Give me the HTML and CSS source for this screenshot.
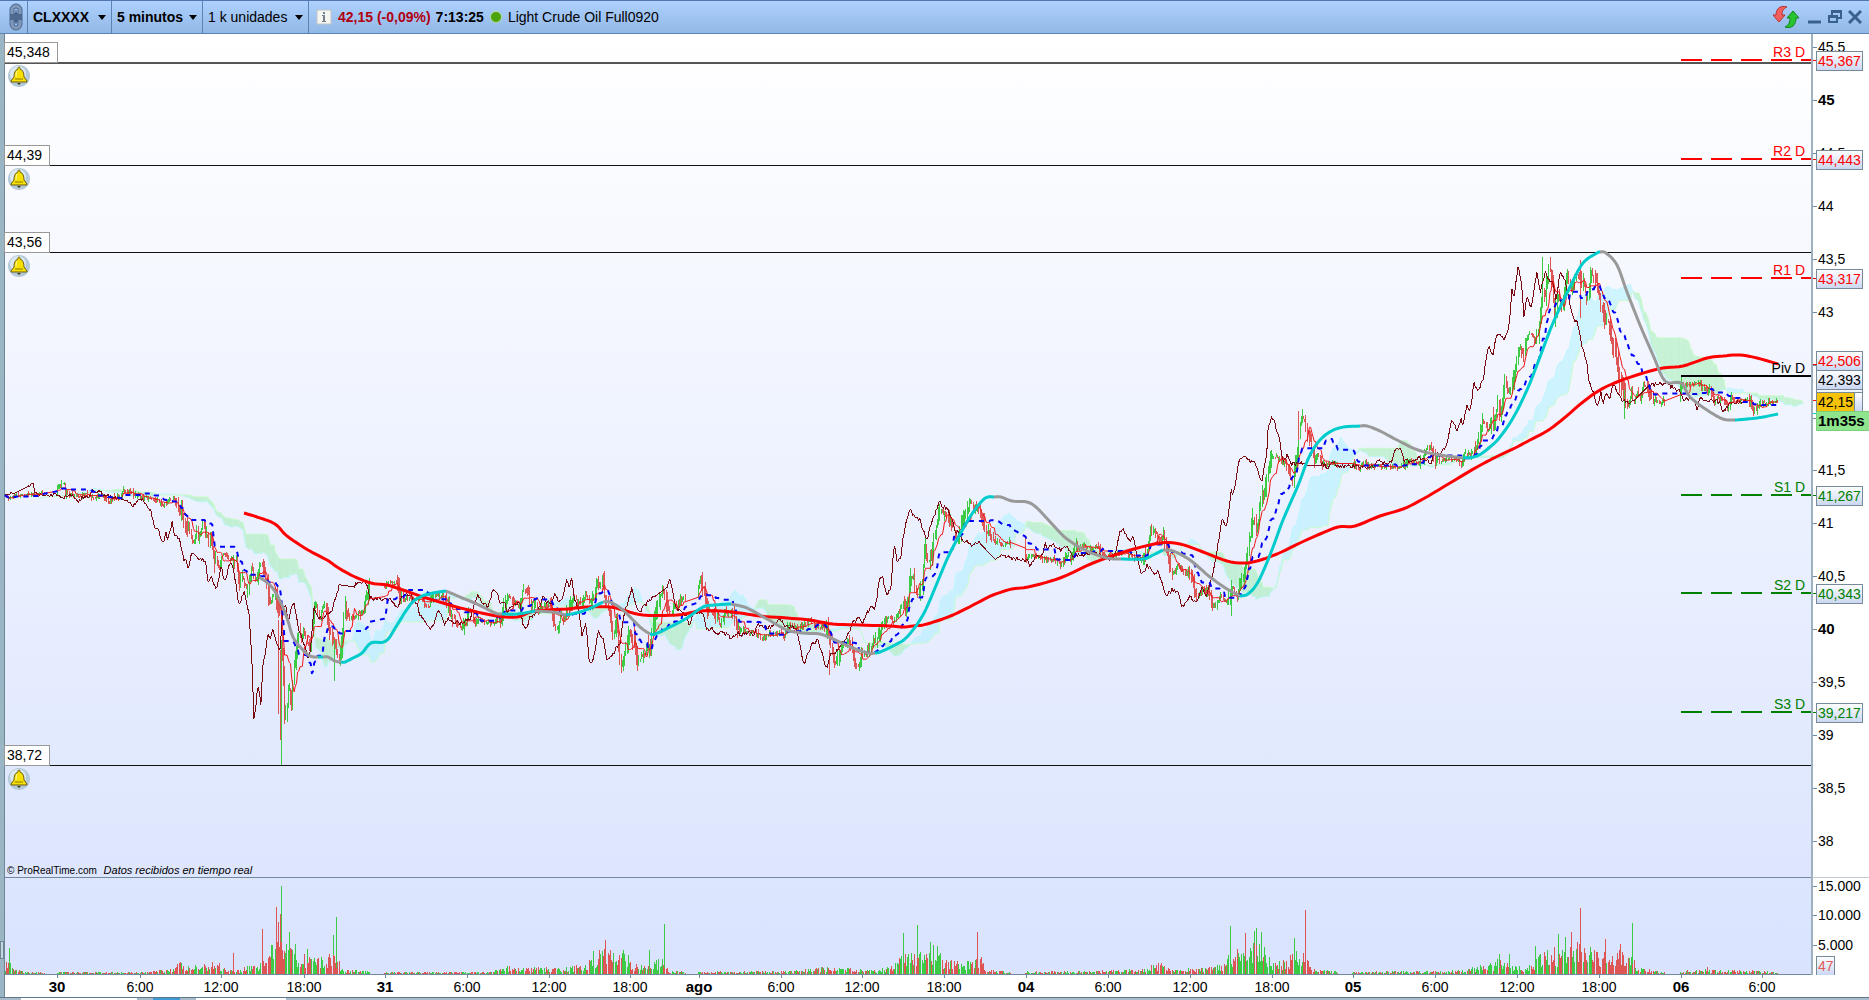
FILE: index.html
```html
<!DOCTYPE html>
<html lang="es">
<head>
    <meta charset="UTF-8">
    <meta name="viewport" content="width=device-width, initial-scale=1.0">
    <title>CLXXXX - 5 minutos</title>
    <link rel="stylesheet" href="styles.css">
</head>
<body>
    <header class="toolbar">
        <button class="link-button" aria-label="Vincular ventanas">
            <svg width="14" height="28" viewBox="0 0 14 28" fill="none">
                <g stroke="#4d6a91" stroke-width="5"><path d="M3 12V7a4 4 0 0 1 8 0v5zM3 17v4a4 4 0 0 0 8 0v-4z"/></g>
                <g stroke="#8099ba" stroke-width="3"><path d="M3 11V7a4 4 0 0 1 8 0v4M3 17v4a4 4 0 0 0 8 0v-4"/></g>
                <path d="M7 7v5M7 16v5" stroke="#3f5c85"/>
            </svg>
        </button>
        <label class="picker picker-symbol">
            <select aria-label="Instrumento"><option>CLXXXX</option></select>
            <span class="caret"></span>
        </label>
        <label class="picker picker-period">
            <select aria-label="Periodo"><option>5 minutos</option></select>
            <span class="caret"></span>
        </label>
        <label class="picker picker-units">
            <select aria-label="Unidades"><option>1 k unidades</option></select>
            <span class="caret"></span>
        </label>
        <button class="info-button" aria-label="Información">
            <svg width="16" height="16" viewBox="0 0 16 16">
                <rect x="1" y="1" width="14" height="14" fill="#f4f4f0" stroke="#c2c6c8"/>
                <path d="M7 3h2v2H7zM6 6h3v6h1v1H6v-1h1V7H6z" fill="#73808c"/>
            </svg>
        </button>
        <span class="last">42,15 (-0,09%)</span>
        <span class="clock">7:13:25</span>
        <span class="status"></span>
        <span class="name">Light Crude Oil Full0920</span>
        <div class="window-buttons">
            <button aria-label="Actualizar">
                <svg width="26" height="24" viewBox="0 0 26 24">
                    <path d="M14 2C8 0 3 3 3 10H0l6 7 6-7H9c0-4 1-6 5-8z" fill="#f2605d" stroke="#b72f31"/>
                    <path d="M12 22c7 2 11-2 11-9h3l-6-7-6 7h3c0 4-1 7-5 9z" fill="#27c42f" stroke="#13831b"/>
                </svg>
            </button>
            <button aria-label="Minimizar">
                <svg width="14" height="14" viewBox="0 0 14 14"><path d="M0 12h13" stroke="#39618f" stroke-width="3"/></svg>
            </button>
            <button aria-label="Restaurar">
                <svg width="14" height="14" viewBox="0 0 14 14" fill="none" stroke="#39618f">
                    <path d="M4 5V1h9v7h-3M4 2h9" stroke-width="2"/><path d="M1 6h8v6H1zM1 7h8" stroke-width="2"/>
                </svg>
            </button>
            <button aria-label="Cerrar">
                <svg width="14" height="14" viewBox="0 0 14 14"><path d="M1 1l12 12M13 1L1 13" stroke="#39618f" stroke-width="3"/></svg>
            </button>
        </div>
    </header>

    <main class="workspace">
        <aside class="rail"><span class="grip"></span></aside>
        <div class="plots">
            <section class="price-panel">
                <svg id="price" class="layer"></svg>
                <p class="credits">© ProRealTime.com <em>Datos recibidos en tiempo real</em></p>
            </section>
            <section class="volume-panel">
                <svg id="volume" class="layer"></svg>
            </section>
        </div>
        <div class="axes">
            <div class="price-axis"><svg id="price-axis" class="layer"></svg></div>
            <div class="volume-axis"><svg id="volume-axis" class="layer"></svg></div>
        </div>
        <div class="time-axis"><svg id="time-axis" class="layer"></svg></div>
    </main>
    <footer class="dock"><span class="dock-tab"></span><span class="dock-active"></span><span class="dock-tab wide"></span></footer>

    <script src="chart.js"></script>
</body>
</html>
```
FILE: styles.css
```css
* { box-sizing: border-box; }
body {
    margin: 0;
    height: 100vh;
    display: flex;
    flex-direction: column;
    overflow: hidden;
    font-family: "Liberation Sans", Arial, sans-serif;
    font-size: 14px;
    color: #000;
    background: #fff;
}
button { border: 0; padding: 0; background: none; cursor: pointer; display: flex; }

/* toolbar */
.toolbar {
    height: 34px;
    flex: none;
    display: flex;
    align-items: center;
    white-space: nowrap;
    border-top: 1px solid #4f78ae;
    border-bottom: 1px solid #5d83b5;
    background: linear-gradient(#aed1ff, #92b8e6);
}
.link-button {
    width: 28px;
    height: 100%;
    padding-left: 9px;
    align-items: center;
    border-right: 1px solid #5d83b5;
}
.picker {
    height: 100%;
    display: flex;
    align-items: center;
    justify-content: space-between;
    padding: 0 5px;
    border-right: 1px solid #5d83b5;
}
.picker select {
    appearance: none;
    border: 0;
    padding: 0;
    background: none;
    font: inherit;
    color: inherit;
}
.picker-symbol { width: 84px; font-weight: bold; }
.picker-period { width: 91px; font-weight: bold; }
.picker-units { width: 106px; }
.caret { border: 4px solid transparent; border-top: 5px solid #000; border-bottom: 0; }
.info-button { margin: 0 6px 0 7px; }
.last { font-weight: bold; color: #b00010; margin-right: 5px; }
.clock { font-weight: bold; }
.status {
    width: 12px;
    height: 12px;
    margin: 0 6px;
    border-radius: 50%;
    border: 1px solid #b8dca0;
    background: #4ca30c;
}
.window-buttons { margin-left: auto; padding-right: 7px; display: flex; align-items: center; gap: 6px; }
.window-buttons button:first-child { margin-right: 3px; }

/* chart area */
.workspace {
    flex: 1;
    min-height: 0;
    display: grid;
    grid-template-columns: 5px 1fr 58px;
    grid-template-rows: 1fr 22px;
}
.rail {
    grid-row: 1 / 3;
    display: flex;
    align-items: flex-end;
    padding-bottom: 38px;
    background: #9ab6c5;
    border-right: 1px solid #6f8794;
}
.grip { width: 4px; height: 18px; border: 1px solid #6f8794; background: #c4d6df; }
.plots, .axes { display: flex; flex-direction: column; min-height: 0; }
.plots { background: linear-gradient(#fff, #d9e3fe); }
.price-panel, .price-axis { position: relative; flex: 1; min-height: 0; }
.volume-panel, .volume-axis { position: relative; height: 98px; flex: none; }
.volume-panel { border-top: 1px solid #718aa0; border-bottom: 1px solid #718aa0; }
.volume-axis { border-top: 1px solid #c3ccd4; }
.axes { border-left: 2px solid #9fb0bf; background: #fff; }
.time-axis { grid-column: 2 / 4; background: #fff; position: relative; }
.layer { position: absolute; inset: 0; width: 100%; height: 100%; display: block; overflow: visible; }
.credits { position: absolute; left: 2px; bottom: 0; margin: 0; font-size: 10px; line-height: 12px; }
.credits em { font-size: 11px; margin-left: 4px; }

/* chart marks */
svg text { font-size: 14px; }
svg .bold { font-size: 15px; font-weight: bold; }
.middle { text-anchor: middle; }
.end { text-anchor: end; }
.tick { stroke: #718aa0; }
.stroke { fill: none; stroke-linejoin: round; }
.up, .down { shape-rendering: crispEdges; }
.up { stroke: #3ccb45; }
.down { stroke: #dd5555; }
.cloud-up { fill: #a5f3ff; opacity: .5; }
.cloud-down { fill: #98efa8; opacity: .5; }
.span-a { stroke: #c0f6ff; }
.span-b { stroke: #c9fbcb; }
.tenkan { stroke: #f01414; }
.kijun { stroke: #0000f5; stroke-width: 2; stroke-dasharray: 5 5; }
.chikou { stroke: #7a0a12; shape-rendering: crispEdges; }
.ma-long { stroke: #ff0000; stroke-width: 3; }
.ma-up { stroke: #00cccc; stroke-width: 3; }
.ma-down { stroke: #999; stroke-width: 3; }
.alert-line { stroke: #111; stroke-width: 1; shape-rendering: crispEdges; }
.alert-line.wide { stroke: #555; stroke-width: 2; }
.alert-tag { fill: #fff; stroke: #999; shape-rendering: crispEdges; }
.pivot { stroke-width: 2; shape-rendering: crispEdges; }
.dashed { stroke-dasharray: 21 9; }
.value-box { fill: url(#box-fill); stroke: #778a99; shape-rendering: crispEdges; }
.value-box.current { fill: #f7c30a; }
.value-box.timer { fill: #8ee58e; stroke: #7bcf7b; }

/* bottom dock, only its top edge shows */
.dock { height: 3px; flex: none; display: flex; gap: 16px; padding-left: 21px; border-top: 1px solid #5f788e; background: #a9bccb; }
.dock-tab { width: 116px; background: #fff; }
.dock-tab.wide { width: 90px; }
.dock-active { width: 27px; background: #3c9ad6; }
```
FILE: chart.js
```javascript
// Coordinates below are on a 1869 x 1000 sheet; FRAME is the plot inside it.
const FRAME = { left: 5, top: 34, width: 1806, height: 843 };
const BAR = 327 / 276;
const SHIFT = 26;
const VOLUME_HEIGHT = 96;

const closes = [
    -26,497, -10,495, 6,494, 13,492, 20,487, 27,489, 33,483, 35,493, 43,495, 58,494, 61,499, 67,496, 73,495, 78,502, 83,497,
    88,497, 93,490, 99,492, 110,497, 117,498, 126,499, 133,505, 138,501, 143,500, 148,506, 151,510, 154,528, 158,530,
    163,543, 166,533, 167,540, 172,523, 174,533, 180,540, 184,561, 186,560, 188,569, 192,553, 197,558, 206,560,
    208,586, 211,575, 215,587, 217,588, 220,573, 221,563, 224,582, 227,575, 230,563, 233,567, 235,578, 239,607,
    244,590, 249,613, 252,660, 254,723, 258,683, 261,704, 263,663, 266,650, 268,633, 271,643, 272,627, 276,640,
    280,650, 283,610, 286,607, 289,623, 292,603, 294,603, 298,627, 302,640, 305,645, 308,660, 310,653, 312,633,
    314,607, 317,617, 323,619, 327,612, 330,615, 333,607, 337,593, 340,583, 343,585, 347,577, 348,583, 353,587,
    357,583, 367,583, 370,598, 393,600, 396,608, 398,607, 403,595, 410,595, 417,603, 419,613, 425,620, 430,631,
    435,620, 438,610, 442,615, 444,625, 448,618, 453,623, 460,623, 467,620,
    470,620, 473,607, 478,595, 482,603, 487,606, 490,602, 493,588, 497,592, 500,602, 505,603, 507,613, 513,605,
    520,602, 523,625, 527,630, 530,618, 535,614, 540,607, 543,595, 546,603, 552,603, 555,593, 560,603, 564,593,
    567,577, 569,588, 572,577, 574,600, 577,604, 580,617, 582,637, 586,623, 589,661, 593,662, 598,632, 603,637,
    607,660, 612,657, 616,647, 620,643, 623,620, 627,605, 632,588, 636,607, 639,613, 643,607, 650,600, 653,596,
    658,595, 661,586, 667,587, 669,580, 672,586, 675,605, 680,612, 687,615, 689,627, 693,612, 703,613, 706,628,
    712,629, 717,635, 722,632, 732,638, 737,632, 742,635, 748,632, 754,634, 758,625, 767,628, 773,625, 780,620,
    785,625, 796,628, 798,635, 801,652, 804,665, 808,653, 813,643, 818,640, 823,657, 827,670, 830,655, 835,653,
    842,643, 847,637, 853,623, 860,618, 862,623, 868,612, 872,606, 875,610, 879,582, 882,575, 887,595, 891,587,
    894,543, 897,562, 901,557, 903,537, 906,523, 910,509, 913,515, 920,520, 922,527, 927,540, 932,520, 935,515,
    939,502, 943,507, 947,508, 952,517, 955,532, 960,533, 964,545, 967,541, 973,546, 978,541, 983,549, 990,543,
    994,560, 1000,556, 1010,558, 1027,560, 1030,567, 1035,557, 1042,555, 1045,543, 1048,548, 1053,544, 1060,550,
    1067,546, 1073,557, 1080,555, 1090,553, 1100,555, 1110,560, 1116,553, 1120,529, 1123,530, 1128,537, 1131,544,
    1133,535, 1137,557, 1142,575, 1147,565, 1153,573, 1158,572, 1162,583, 1166,597, 1172,590, 1178,592, 1182,607,
    1187,602, 1190,597, 1197,602, 1202,588, 1206,598, 1210,583, 1213,573, 1217,550, 1220,533, 1222,518, 1227,527,
    1231,490, 1233,497, 1237,473, 1239,460, 1244,456, 1248,460, 1253,463, 1255,461, 1258,473, 1262,480, 1264,468,
    1267,453, 1268,430, 1271,418, 1274,419, 1276,430, 1278,432, 1283,460, 1287,455, 1291,463, 1297,465, 1303,463,
    1310,466, 1317,467, 1322,463, 1328,468, 1333,462, 1338,466, 1353,466, 1363,467, 1373,467, 1377,460, 1382,463,
    1392,462, 1394,450, 1400,448, 1404,460, 1413,461, 1420,458, 1425,460, 1432,462, 1434,452, 1440,455, 1446,445,
    1449,435, 1452,418, 1457,432, 1461,420, 1463,427, 1467,403, 1470,413, 1474,383, 1478,393, 1481,382, 1483,383,
    1488,345, 1493,355, 1496,337, 1499,332, 1505,340, 1509,327, 1512,290, 1514,297, 1518,267, 1522,287, 1524,318,
    1527,295, 1531,308, 1537,272, 1540,293, 1545,272, 1550,283, 1553,280, 1556,302, 1560,273, 1565,280, 1568,295,
    1572,315, 1578,325, 1583,350, 1587,363, 1589,382, 1593,390, 1597,407, 1601,393, 1603,402, 1607,392, 1610,398,
    1613,383, 1617,390, 1622,400, 1628,403, 1635,400, 1640,393, 1644,382, 1647,385, 1657,384, 1665,383, 1682,393,
    1683,400, 1693,398, 1697,410, 1700,397, 1707,401, 1713,400, 1720,402, 1723,413, 1730,403, 1740,402, 1748,401
];
const longAverage = [
    244,513, 257,517, 275,524, 287,536, 308,550, 327,560, 337,567, 353,576, 371,583, 387,585, 403,590, 423,597,
    443,603, 453,606, 473,611, 497,616, 517,617, 535,611, 567,609, 587,607, 610,607, 623,610, 643,615, 677,615,
    700,611, 720,611, 740,613, 760,616, 787,618, 810,620, 833,624, 860,625, 890,626, 903,627, 913,626, 927,624,
    953,615, 977,603, 993,595, 1012,589, 1028,587, 1060,578, 1093,563, 1127,551, 1160,543, 1180,544, 1203,552,
    1227,561, 1243,563, 1257,561, 1277,554, 1300,543, 1320,534, 1338,527, 1355,526, 1380,516, 1403,509, 1423,499,
    1450,483, 1477,467, 1500,455, 1515,448, 1530,440, 1547,431, 1563,419, 1583,402, 1600,390, 1617,382, 1640,374,
    1663,368, 1683,366, 1707,358, 1723,356, 1740,355, 1757,358, 1778,364
];
const mediumAverage = [
    ['down', [259,577, 270,585, 278,597, 287,618, 293,637, 302,649, 310,656, 318,657]],
    ['up', [318,657, 323,657]],
    ['down', [323,657, 328,657, 335,661, 341,662]],
    ['up', [341,662, 345,662, 353,658, 362,653, 371,643, 386,641, 397,625, 410,605, 420,597, 433,593, 446,591]],
    ['down', [446,591, 460,597, 477,604, 495,613, 502,614]],
    ['up', [502,614, 517,614, 535,611]],
    ['down', [535,611, 553,612, 566,615]],
    ['up', [566,615, 580,612, 593,607, 603,602]],
    ['down', [603,602, 610,602, 623,610, 640,627, 650,634]],
    ['up', [650,634, 655,634, 670,627, 687,618, 703,607, 715,605, 731,604]],
    ['down', [731,604, 747,608, 767,619, 787,630, 803,633, 820,634, 833,639, 853,648, 868,653, 875,653]],
    ['up', [875,653, 880,652, 893,646, 907,637, 923,615, 935,588, 950,553, 970,517, 982,501, 988,497, 994,497]],
    ['down', [994,497, 1001,497, 1012,501, 1027,502, 1037,508, 1053,525, 1067,539, 1087,551, 1107,558, 1121,559]],
    ['up', [1121,559, 1143,559, 1153,555, 1163,550]],
    ['down', [1163,550, 1173,551, 1190,560, 1210,577, 1227,589, 1240,596]],
    ['up', [1240,596, 1248,594, 1258,582, 1270,555, 1283,520, 1297,488, 1310,455, 1323,437, 1339,428, 1360,426]],
    ['down', [1360,426, 1367,426, 1380,431, 1397,440, 1418,450, 1440,455, 1463,458]],
    ['up', [1463,458, 1477,456, 1490,447, 1500,437, 1513,418, 1527,390, 1540,357, 1553,323, 1570,287, 1583,263, 1597,253, 1600,252]],
    ['down', [1600,252, 1606,253, 1617,265, 1627,292, 1640,325, 1653,355, 1665,381, 1681,383, 1690,397, 1707,410, 1723,419, 1735,420]],
    ['up', [1735,420, 1757,418, 1778,414]]
];
const longWicks = [[281, 640, 765, 'up'], [280, 650, 740, 'down'], [278, 620, 714, 'down'], [1542, 257, 300, 'up'], [334, 640, 681, 'up'],
    [1231, 580, 616, 'up'], [1580, 260, 318, 'down'], [829, 650, 675, 'down'], [1624, 390, 419, 'up'], [1298, 411, 440, 'down'], [1681, 376, 395, 'up']];
const sessionBreaks = [[45, 57], [370, 384], [686, 698], [1012, 1025], [1339, 1352], [1666, 1680]];

const volumeShape = [
    5,8, 9,14, 14,4, 25,2, 50,2, 150,2, 175,6, 180,11, 186,6, 205,9, 216,12, 228,4, 240,4, 250,9, 258,8, 268,18, 275,40,
    285,40, 292,36, 300,16, 308,22, 318,13, 330,18, 338,16, 343,4, 380,2, 490,2, 505,7, 520,5, 540,6, 560,5, 580,8,
    588,8, 590,18, 612,24, 625,24, 632,10, 645,8, 662,14, 670,3, 700,2, 800,3, 820,7, 840,5, 860,5, 880,4, 895,8, 903,20,
    915,24, 925,18, 935,28, 945,13, 965,11, 982,16, 985,4, 1010,2, 1100,3, 1140,5, 1160,10, 1170,5, 1200,5, 1220,8, 1230,18,
    1245,24, 1262,28, 1272,13, 1285,12, 1295,24, 1305,22, 1312,5, 1350,2, 1450,3, 1475,6, 1490,10, 1500,14, 1525,6, 1535,14,
    1550,22, 1560,24, 1580,28, 1600,18, 1615,22, 1633,16, 1640,5, 1665,2, 1700,4, 1730,4, 1778,2
];
const volumeSpikes = [[9,26,'up'], [180,12,'down'], [233,21,'down'], [262,45,'down'], [276,67,'down'], [278,52,'down'], [280,60,'down'],
    [281,88,'up'], [289,42,'up'], [307,25,'up'], [333,39,'up'], [336,57,'up'], [605,34,'down'], [649,24,'up'], [664,50,'up'], [903,41,'up'],
    [917,49,'up'], [930,32,'up'], [977,42,'down'], [1230,48,'up'], [1245,41,'down'], [1254,43,'up'], [1256,46,'up'], [1261,42,'up'],
    [1294,36,'up'], [1305,64,'down'], [1499,20,'up'], [1509,20,'up'], [1535,28,'up'], [1558,40,'up'], [1565,37,'up'], [1571,42,'down'],
    [1580,66,'down'], [1605,35,'down'], [1620,30,'down'], [1632,51,'up'], [1707,7,'down']];

const alerts = [['45,348', 62, 52], ['44,39', 165, 44], ['43,56', 252, 44], ['38,72', 765, 44]];
const pivots = [['R3 D', 60, 'red', '45,367'], ['R2 D', 159, 'red', '44,443'], ['R1 D', 278, 'red', '43,317'], ['Piv D', 376, 'black', ''],
    ['S1 D', 495, 'green', '41,267'], ['S2 D', 593, 'green', '40,343'], ['S3 D', 712, 'green', '39,217']];
const times = [['30', 57], ['6:00', 140], ['12:00', 221], ['18:00', 304], ['31', 385], ['6:00', 467], ['12:00', 549], ['18:00', 630],
    ['ago', 699], ['6:00', 781], ['12:00', 862], ['18:00', 944], ['04', 1026], ['6:00', 1108], ['12:00', 1190], ['18:00', 1272],
    ['05', 1353], ['6:00', 1435], ['12:00', 1517], ['18:00', 1599], ['06', 1681], ['6:00', 1762]];

function pairs(flat) {
    const out = [];
    for (let i = 0; i < flat.length; i += 2) out.push([flat[i], flat[i + 1]]);
    return out;
}

function sample(points, x) {
    let i = 1;
    while (i < points.length - 1 && points[i][0] < x) i++;
    const [x0, y0] = points[i - 1];
    const [x1, y1] = points[i];
    return y0 + (y1 - y0) * Math.max(0, Math.min(1, (x - x0) / (x1 - x0)));
}

// Catmull-Rom through the points
function smooth(points) {
    const out = [];
    for (let i = 0; i < points.length - 1; i++) {
        const p0 = points[i - 1] || points[i], p1 = points[i], p2 = points[i + 1], p3 = points[i + 2] || p2;
        for (let t = 0; t < 1; t += .2) {
            out.push([0, 1].map(k => .5 * (2 * p1[k] + (p2[k] - p0[k]) * t + (2 * p0[k] - 5 * p1[k] + 4 * p2[k] - p3[k]) * t * t
                + (3 * p1[k] - p0[k] - 3 * p2[k] + p3[k]) * t * t * t)));
        }
    }
    out.push(points[points.length - 1]);
    return out;
}

// small repeatable generator, so the bars stay put on resize
function random(seed) {
    return () => {
        seed = (seed * 16807) % 2147483647;
        return seed / 2147483647;
    };
}

const inBreak = x => sessionBreaks.some(([a, b]) => x > a && x < b);

function buildBars() {
    const rnd = random(77);
    const points = pairs(closes);
    const bars = [];
    for (let x = 5; x <= 1778; x += BAR) {
        if (inBreak(x)) continue;
        const source = x - SHIFT * BAR;
        const y = sample(points, source);
        const slope = Math.abs(sample(points, source + 4) - sample(points, source - 4));
        const size = 2 + Math.min(10, slope / 2);
        const close = y + (rnd() - .5) * 4;
        const previous = bars.length ? bars[bars.length - 1].close : close;
        bars.push({ x, close, high: Math.min(close, previous) - rnd() * size, low: Math.max(close, previous) + rnd() * size,
            side: close <= previous ? 'up' : 'down' });
    }
    return bars;
}

function middle(bars, i, length) {
    const part = bars.slice(Math.max(0, i - length + 1), i + 1);
    return (Math.min(...part.map(b => b.high)) + Math.max(...part.map(b => b.low))) / 2;
}

const bars = buildBars();
const tenkan = bars.map((b, i) => [b.x, middle(bars, i, 9)]);
const kijun = bars.map((b, i) => [b.x, middle(bars, i, 26)]);
const chikou = bars.slice(SHIFT).map(b => [b.x - SHIFT * BAR, b.close]);
const spanA = bars.map((b, i) => [b.x + SHIFT * BAR, (tenkan[i][1] + kijun[i][1]) / 2]).filter(p => p[0] < 1804);
const spanB = bars.map((b, i) => [b.x + SHIFT * BAR, middle(bars, i, 52)]).filter(p => p[0] < 1804);

function bell(x, y) {
    return `<g transform="translate(${x - 11} ${y - 11})"><circle cx="11" cy="11" r="11" fill="#b4c9d9"/><circle cx="10" cy="9" r="8" fill="#dce8f0"/>
        <path d="M11 2c1 0 1 1 1 2 3 1 4 4 4 8l3 4v1H3v-1l3-4c0-4 1-7 4-8 0-1 0-2 1-2z" fill="#f8e000" stroke="#6d5d10"/>
        <path d="M7 14h8" stroke="#8d7a08"/><path d="M9 6c-1 2-1 4-1 6" stroke="#fffbb0" fill="none"/><path d="M9 18h4l-2 2z" fill="#443a08"/></g>`;
}

function drawPrice() {
    const svg = document.getElementById('price');
    const { width, height } = svg.getBoundingClientRect();
    const X = x => ((x - FRAME.left) * width / FRAME.width).toFixed(1);
    const Y = y => ((y - FRAME.top) * height / FRAME.height).toFixed(1);
    const line = (points, name) => `<path class="stroke ${name}" d="M${points.map(p => X(p[0]) + ' ' + Y(p[1])).join('L')}"/>`;
    let html = '';

    for (let i = 1; i < spanA.length; i++) {
        const a = spanA[i - 1], b = spanA[i], c = spanB[i], d = spanB[i - 1];
        const name = b[1] < c[1] ? 'cloud-up' : 'cloud-down';
        html += `<path class="${name}" d="M${[a, b, c, d].map(p => X(p[0]) + ' ' + Y(p[1])).join('L')}Z"/>`;
    }
    html += line(spanA, 'span-a') + line(spanB, 'span-b');

    alerts.forEach(([label, y, w], i) => {
        const top = Math.round(Y(y));
        html += i ? `<path class="alert-line" d="M0 ${top}.5H${width}"/>` : `<path class="alert-line wide" d="M0 ${top + 1}H${width}"/>`;
        html += `<rect class="alert-tag" x="-1" y="${top - 20}" width="${w + 1}" height="20"/>`;
        html += `<text x="2" y="${top - 5}">${label}</text>${bell(14, top + 14)}`;
    });
    ['up', 'down'].forEach(side => {
        html += `<path class="${side}" d="${bars.filter(b => b.side === side).map(b => `M${Math.floor(X(b.x))}.5 ${Y(b.high)}V${Y(b.low)}`).join('')}"/>`;
    });
    longWicks.forEach(([x, top, bottom, side]) => { html += `<path class="${side}" d="M${Math.floor(X(x))}.5 ${Y(top)}V${Y(bottom)}"/>`; });
    html += line(chikou, 'chikou') + line(tenkan, 'tenkan') + line(kijun, 'kijun') + line(smooth(pairs(longAverage)), 'ma-long');
    mediumAverage.forEach(([side, points]) => { html += line(smooth(pairs(points)), 'ma-' + side); });

    pivots.forEach(([label, y, color]) => {
        const top = Math.round(Y(y));
        html += `<path class="pivot ${color === 'black' ? '' : 'dashed'}" stroke="${color}" d="M${X(1681)} ${top}H${width}"/>`;
        html += `<text class="end" x="${width - 6}" y="${top - 3}" fill="${color}">${label}</text>`;
    });
    svg.innerHTML = html;
}

function drawPriceAxis() {
    const svg = document.getElementById('price-axis');
    const height = svg.getBoundingClientRect().height;
    const Y = y => Math.round((y - FRAME.top) * height / FRAME.height);
    const box = (label, y, color, name = '', w = 46) => `<rect class="value-box ${name}" x="3" y="${Y(y) - 10}" width="${w}" height="19"/>
        <text x="5" y="${Y(y) + 5}" fill="${color}" class="${name === 'timer' ? 'bold' : ''}">${label}</text>`;
    let html = `<defs><linearGradient id="box-fill" x2="0" y2="1"><stop stop-color="#fff"/><stop offset="1" stop-color="#ccd8f2"/></linearGradient></defs>`;
    for (let price = 45.5; price >= 38; price -= .5) {
        const y = 100 + (45 - price) * 105.85;
        html += `<path class="tick" d="M0 ${Y(y)}.5h4"/>`;
        if (price === 42.5 || price === 42) continue;
        html += `<text x="5" y="${Y(y) + 5}" class="${price % 5 ? '' : 'bold'}">${String(price).replace('.', ',')}</text>`;
    }
    pivots.filter(p => p[3]).forEach(([, y, color, value]) => {
        html += `<path stroke="${color}" d="M0 ${Y(y)}.5h4"/>` + box(value, y + 1, color);
    });
    html += box('', 396, 'black') + box('', 402, 'black') + box('42,506', 361, 'red') + box('42,393', 380, 'black');
    html += '<path stroke="red" d="M0 ' + Y(364) + '.5h4M0 ' + Y(400) + '.5h4"/><path stroke="#00cccc" d="M0 ' + Y(413) + '.5h4"/>';
    html += box('42,15', 402, 'black', 'current', 38) + box('1m35s', 421, 'black', 'timer', 53);
    svg.innerHTML = html;
}

function drawVolume() {
    const svg = document.getElementById('volume');
    const { width, height } = svg.getBoundingClientRect();
    const rnd = random(4242);
    const shape = pairs(volumeShape);
    const X = x => Math.floor((x - FRAME.left) * width / FRAME.width) + .5;
    const H = h => Math.round(h * height / VOLUME_HEIGHT);
    const paths = { up: '', down: '' };
    bars.forEach(bar => {
        const h = sample(shape, bar.x) * (.3 + rnd() * .9);
        paths[bar.side] += `M${X(bar.x)} ${height}v-${H(h)}`;
    });
    volumeSpikes.forEach(([x, h, side]) => { paths[side] += `M${X(x)} ${height}v-${H(h)}`; });
    svg.innerHTML = `<path class="up" d="${paths.up}"/><path class="down" d="${paths.down}"/>`;
}

function drawVolumeAxis() {
    let html = '';
    [['15.000', 8], ['10.000', 37], ['5.000', 67]].forEach(([label, y]) => {
        html += `<path class="tick" d="M0 ${y}.5h4"/><text x="5" y="${y + 5}">${label}</text>`;
    });
    html += '<rect class="value-box" x="3" y="78" width="18" height="19"/><text x="5" y="93" fill="#e05a5a">47</text>';
    document.getElementById('volume-axis').innerHTML = html;
}

function drawTimeAxis() {
    const width = document.getElementById('price').getBoundingClientRect().width;
    document.getElementById('time-axis').innerHTML = times.map(([label, time]) => {
        const x = Math.round((time - FRAME.left) * width / FRAME.width);
        return `<path class="tick" d="M${x}.5 0v3"/><text class="middle ${label.includes(':') ? '' : 'bold'}" x="${x}" y="17">${label}</text>`;
    }).join('');
}

function draw() {
    drawPrice();
    drawPriceAxis();
    drawVolume();
    drawVolumeAxis();
    drawTimeAxis();
}

draw();
window.addEventListener('resize', draw);
```
